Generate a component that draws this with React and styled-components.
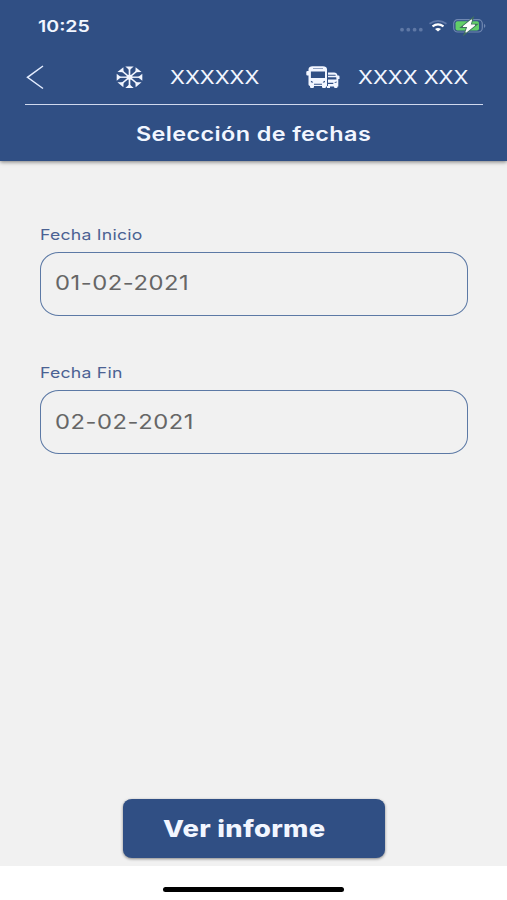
import React from "react";
import styled, { createGlobalStyle } from "styled-components";

const GlobalStyle = createGlobalStyle`
  * { box-sizing: border-box; }
  body { margin: 0; background: #ffffff; }
`;

const Screen = styled.div`
  width: 507px;
  height: 900px;
  display: flex;
  flex-direction: column;
  overflow: hidden;
  background: #f1f1f1;
  font-family: Inter, "Liberation Sans", sans-serif;
`;

const WideText = styled.span`
  display: block;
  flex: none;
  width: max-content;
  white-space: pre;
  line-height: 1;
  transform: scaleX(${(p) => p.$stretch || 1.2});
  transform-origin: left center;
  font-size: ${(p) => p.$size}px;
  font-weight: ${(p) => p.$weight || 400};
  letter-spacing: ${(p) => p.$spacing || 0}px;
  color: ${(p) => p.$color || "#f2f6ff"};
`;

const Header = styled.header`
  flex: none;
  height: 161px;
  background: #304f84;
  box-shadow: 0 1px 4px rgba(0, 0, 0, 0.5);
`;

const StatusBar = styled.div`
  display: flex;
  justify-content: space-between;
  align-items: center;
  height: 52px;
  padding: 0 20px 0 38px;
`;

const StatusIcons = styled.svg`
  display: block;
  width: 88px;
  height: 20px;
`;

const NavRow = styled.div`
  display: grid;
  grid-template-columns: 90px 55px 135px 53px 1fr;
  align-items: center;
  height: 53px;
  margin: 0 24px 0 25px;
  padding-bottom: 1px;
  border-bottom: 1.5px solid #d0d9ee;
`;

const NavIcon = styled.svg`
  display: block;
  width: ${(p) => p.$w}px;
  height: ${(p) => p.$h}px;
`;

const TitleRow = styled.div`
  display: flex;
  align-items: center;
  height: 56px;
  padding: 3px 0 0 136px;
`;

const Form = styled.main`
  flex: 1;
  display: flex;
  flex-direction: column;
  padding: 66px 39px 0 40px;
`;

const Field = styled.div`
  height: 138.5px;
  padding-top: 0.6px;
`;

const FieldBox = styled.div`
  display: flex;
  align-items: center;
  height: 64px;
  margin-top: 9.4px;
  padding: 1px 0 0 14px;
  border: 1.5px solid #5c79a5;
  border-radius: 19px / 17px;
`;

const Footer = styled.footer`
  flex: none;
  display: flex;
  justify-content: center;
  height: 67px;
`;

const Button = styled.button`
  display: flex;
  align-items: center;
  width: 262px;
  height: 59px;
  padding: 2px 0 0 40px;
  border: 0;
  border-radius: 9px / 8px;
  background: #304f84;
  box-shadow: 0 1px 3px rgba(0, 0, 0, 0.45);
  font-family: inherit;
`;

const HomeArea = styled.div`
  flex: none;
  display: flex;
  justify-content: center;
  height: 34px;
  padding-top: 21px;
  background: #ffffff;
`;

const HomeIndicator = styled.div`
  width: 181px;
  height: 5px;
  border-radius: 3px;
  background: #000000;
`;

const BOLT = "M72.5 4L64.5 10.5H69L67 16L75.5 9.2H71Z";

function Status() {
  return (
    <StatusIcons viewBox="0 0 88 20">
      <g fill="#5f78a5">
        <circle cx="3" cy="13.7" r="1.9" />
        <circle cx="9.3" cy="13.7" r="1.9" />
        <circle cx="15.6" cy="13.7" r="1.9" />
        <circle cx="21.8" cy="13.7" r="1.9" />
      </g>
      <g fill="none" strokeWidth="1.7">
        <path d="M30.5 7.8Q39 2 47.5 7.8" stroke="#5f78a8" />
        <path d="M33.5 10.3Q39 6.5 44.5 10.3" stroke="#fff" strokeWidth="2.2" />
      </g>
      <path d="M36 12.9Q39 11 42 12.9L39 15.4Z" fill="#fff" />
      <rect x="54.7" y="3.7" width="28.6" height="12.3" rx="4" fill="none" stroke="#7088b2" strokeWidth="1.2" />
      <path d="M85 7.7Q87.8 9.8 85 12Z" fill="#7088b2" />
      <rect x="56.5" y="5.3" width="23.5" height="9.2" rx="2" fill="#62cf68" />
      <path d={BOLT} fill="none" stroke="#40705f" strokeWidth="3" />
      <path d={BOLT} fill="#fff" stroke="#fff" strokeWidth="1.2" strokeLinejoin="round" />
    </StatusIcons>
  );
}

function Snowflake() {
  return (
    <NavIcon $w={30} $h={24} viewBox="0 0 30 24">
      <g transform="translate(14.5 11.2) scale(1.2 1)" fill="none" stroke="#f2f6ff" strokeWidth="1.4">
        {[0, 45, 90, 135, 180, 225, 270, 315].map((a) => (
          <g key={a} transform={`rotate(${a})`}>
            <path d="M0 0V-9" />
            <path d="M-3.5 -10.7H3.5L0 -7Z" fill="#f2f6ff" stroke="none" />
          </g>
        ))}
        <circle r="2.5" fill="#f2f6ff" stroke="none" />
      </g>
    </NavIcon>
  );
}

function Vehicles() {
  return (
    <NavIcon $w={35} $h={24} viewBox="0 0 35 24">
      <path
        fill="#f2f6ff"
        fillRule="evenodd"
        d="M3.500 3Q4 .3 7.500 .3H18Q21.500 .3 22 3V20.500H21V21Q21 22 19.800 22H18.300Q17 22 17 21V20H9V21Q9 22 7.800 22H6.300Q5 22 5 21V20Q3.500 19.800 3.500 18.500V9.500H2.500Q1.300 9.500 1.300 8.500V6Q1.300 5 2.500 5H3.500ZM8 2.400V3H18V2.400ZM5.900 5.400V12H20V5.400ZM5.900 14.700V16.200L8.200 16.700Q8 15 5.900 14.700ZM20 14.700Q17.900 15 17.700 16.700L20 16.200ZM9 17.800V18.700H17V17.800Z"
      />
      <path
        fill="#f2f6ff"
        fillRule="evenodd"
        d="M23 6.500H29Q32 6.500 32.500 9.500H33.500Q34.500 9.500 34.500 10.500V13H33.300V20.500H32.500V21Q32.500 22 31.500 22H30.300Q29 22 29 21V20.500H25V22H22V20H23ZM23 8.800V9.800H30.700L30.500 8.800ZM23 11.300V13.500H31.500L31.200 11.300ZM23 16.800V17.900H28.300V16.800ZM31.700 15.400Q29.500 15.500 29.400 17.100L31.700 16.600Z"
      />
    </NavIcon>
  );
}

function DateField({ label, value }) {
  return (
    <Field>
      <WideText $size={14.7} $color="#4b6293" $spacing={0.2}>{label}</WideText>
      <FieldBox>
        <WideText $size={19.8} $color="#666666" $spacing={0.46}>{value}</WideText>
      </FieldBox>
    </Field>
  );
}

export default function App() {
  return (
    <>
      <GlobalStyle />
      <Screen>
        <Header>
          <StatusBar>
            <WideText $size={16} $weight={600} $stretch={1.22}>10:25</WideText>
            <Status />
          </StatusBar>
          <NavRow>
            <NavIcon $w={20} $h={26} viewBox="0 0 20 26">
              <path d="M18 1L2.5 12.3L18 23.5" fill="none" stroke="#e4edff" strokeWidth="1.5" />
            </NavIcon>
            <Snowflake />
            <WideText $size={18.5} $stretch={1.18}>XXXXXX</WideText>
            <Vehicles />
            <WideText $size={18.5} $stretch={1.18}>XXXX XXX</WideText>
          </NavRow>
          <TitleRow>
            <WideText $size={19.5} $weight={600} $spacing={0.32}>Selección de fechas</WideText>
          </TitleRow>
        </Header>
        <Form>
          <DateField label="Fecha Inicio" value="01-02-2021" />
          <DateField label="Fecha Fin" value="02-02-2021" />
        </Form>
        <Footer>
          <Button type="button">
            <WideText $size={22.3} $weight={800} $stretch={1.225} $spacing={0.25}>Ver informe</WideText>
          </Button>
        </Footer>
        <HomeArea>
          <HomeIndicator />
        </HomeArea>
      </Screen>
    </>
  );
}
